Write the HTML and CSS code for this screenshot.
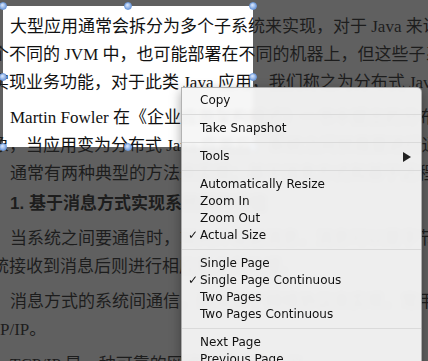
FILE: index.html
```html
<!DOCTYPE html>
<html lang="zh-CN">
<head>
  <meta charset="UTF-8">
  <title>分布式 Java 应用</title>
  <link rel="stylesheet" href="styles.css">
</head>
<body>
  <div class="page">
    <p class="line indent">大型应用通常会拆分为多个子系统来实现，对于 Java 来说，这些子系统</p>
    <p class="line cut">个不同的 JVM 中，也可能部署在不同的机器上，但这些子系统又不是完全</p>
    <p class="line cut">实现业务功能，对于此类 Java 应用，我们称之为分布式 Java 应用。</p>
    <p class="line indent para">Martin Fowler 在《企业应用架构模式》一书中提出的分布式对象设计</p>
    <p class="line cut">象，当应用变为分布式 Java 应用后，系统之间就需要进行通信，</p>
    <p class="line indent">通常有两种典型的方法来实现：基于消息方式和基于远程调用方式。</p>
    <p class="line indent heading">1. 基于消息方式实现系统间的通信</p>
    <p class="line indent para">当系统之间要通信时，就向外发送消息，消息可以是字节流、字节数组</p>
    <p class="line cut">统接收到消息后则进行相应的业务处理。</p>
    <p class="line indent para">消息方式的系统间通信，通常基于网络协议来实现，常用的协议有 TC</p>
    <p class="line flush">P/IP。</p>
    <p class="line indent para">TCP/IP 是一种可靠的网络数据传输协议，</p>
  </div>

  <div class="selection">
    <span class="handle tl"></span>
    <span class="handle tc"></span>
    <span class="handle tr"></span>
    <span class="handle ml"></span>
    <span class="handle mr"></span>
    <span class="handle bl"></span>
    <span class="handle bc"></span>
    <span class="handle br"></span>
  </div>

  <div class="menu">
    <div class="item"><span class="check"></span>Copy</div>
    <div class="sep"></div>
    <div class="item"><span class="check"></span>Take Snapshot</div>
    <div class="sep"></div>
    <div class="item"><span class="check"></span>Tools<span class="arrow"></span></div>
    <div class="sep"></div>
    <div class="item"><span class="check"></span>Automatically Resize</div>
    <div class="item"><span class="check"></span>Zoom In</div>
    <div class="item"><span class="check"></span>Zoom Out</div>
    <div class="item"><span class="check">✓</span>Actual Size</div>
    <div class="sep"></div>
    <div class="item"><span class="check"></span>Single Page</div>
    <div class="item"><span class="check">✓</span>Single Page Continuous</div>
    <div class="item"><span class="check"></span>Two Pages</div>
    <div class="item"><span class="check"></span>Two Pages Continuous</div>
    <div class="sep"></div>
    <div class="item"><span class="check"></span>Next Page</div>
    <div class="item"><span class="check"></span>Previous Page</div>
  </div>
</body>
</html>
```

FILE: styles.css
```css
* {
  margin: 0;
  padding: 0;
  box-sizing: border-box;
}
html, body {
  width: 428px;
  height: 361px;
  overflow: hidden;
  background-color: #fff;
}
.page {
  padding-top: 13px;
  font-family: 'Liberation Serif', 'Noto Sans CJK SC', serif;
  font-size: 17px;
  color: #111;
}
.line {
  height: 28px;
  line-height: 28px;
  white-space: nowrap;
}
.line.indent {
  padding-left: 10px;
}
.line.cut {
  margin-left: -8px;
}
.line.para {
  margin-top: 7px;
}
.line.heading {
  margin-top: 2px;
  font-family: 'Liberation Sans', 'Noto Sans CJK SC', sans-serif;
  font-weight: bold;
}

/* lit area of the selection, the rest of the page is dimmed */
.selection {
  position: absolute;
  left: 3px;
  top: 6px;
  width: 250px;
  height: 141px;
  box-shadow: 0 0 0 1200px rgba(35, 35, 35, 0.72);
}
.handle {
  position: absolute;
  width: 8px;
  height: 8px;
  margin: -4px 0 0 -4px;
  border-radius: 50%;
  background: radial-gradient(circle at 40% 35%, #dbe8fb, #8db0e6 60%, #5f8fd6);
  border: 1px solid #6f9bdc;
}
.handle.tl { left: 0; top: 0; }
.handle.tc { left: 50%; top: 0; }
.handle.tr { left: 100%; top: 0; }
.handle.ml { left: 0; top: 50%; }
.handle.mr { left: 100%; top: 50%; }
.handle.bl { left: 0; top: 100%; }
.handle.bc { left: 50%; top: 100%; }
.handle.br { left: 100%; top: 100%; }

.menu {
  position: absolute;
  left: 181px;
  top: 87px;
  width: 241px;
  padding-top: 4px;
  background-color: rgba(246, 246, 246, 0.95);
  backdrop-filter: blur(2px);
  border: 1px solid rgba(0, 0, 0, 0.28);
  border-radius: 0 5px 5px 5px;
  box-shadow: 0 4px 12px rgba(0, 0, 0, 0.35);
  font-family: 'DejaVu Sans', sans-serif;
  font-size: 12px;
  color: #111;
}
.item {
  display: flex;
  align-items: center;
  height: 17px;
  line-height: 17px;
  padding-left: 6px;
  padding-right: 10px;
}
.check {
  width: 12px;
  flex: 0 0 12px;
}
.arrow {
  margin-left: auto;
  width: 0;
  height: 0;
  border-left: 8px solid #222;
  border-top: 5px solid transparent;
  border-bottom: 5px solid transparent;
}
.sep {
  margin: 5px 0;
  border-top: 1px solid #dadada;
}
```
